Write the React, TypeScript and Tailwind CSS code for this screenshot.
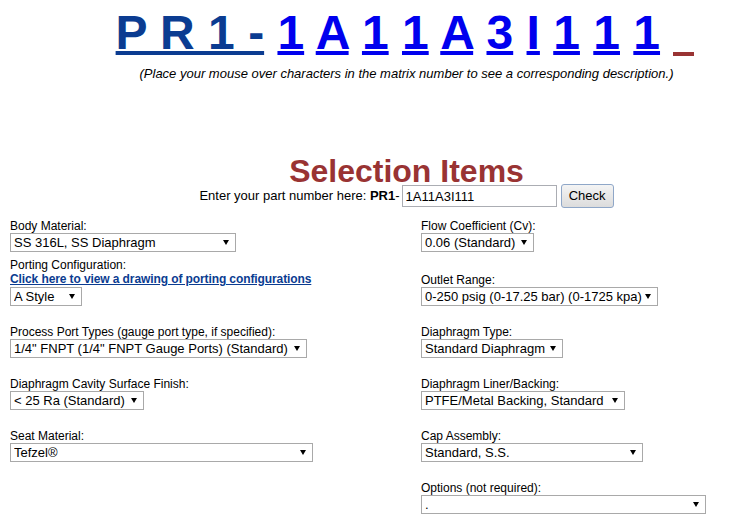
import React from "react";

const chars = ["1", "A", "1", "1", "A", "3", "I", "1", "1", "1"];

const Label = ({ children, className = "" }: { children: React.ReactNode; className?: string }) => (
  <div className={`h-[14px] leading-[14px] ${className}`}>{children}</div>
);

const Select = ({ value, className }: { value: string; className: string }) => (
  <div className={`relative h-[19px] ${className}`}>
    <select
      defaultValue={value}
      className="h-full w-full appearance-none rounded-none border border-[#a9a9a9] bg-white pl-[3px] pr-[8px] text-[13px] leading-[17px] text-black outline-none"
    >
      <option>{value}</option>
    </select>
    <svg
      className="pointer-events-none absolute right-[7px] top-[7px]"
      width="6"
      height="5"
      viewBox="0 0 6 5"
    >
      <path d="M0 0h6L3 5z" fill="#000" />
    </svg>
  </div>
);

export default function App() {
  return (
    <div className="min-h-[522px] w-[734px] bg-white font-['Liberation_Sans',Arial,sans-serif] text-black">
      <div className="pl-[76px] text-center">
        <div className="pt-[5px] text-[48px] font-bold leading-[55px]">
          <span className="text-[#0b3c91] underline decoration-4">P R 1 -</span>{" "}
          {chars.map((c, i) => (
            <React.Fragment key={i}>
              <a href="#" className="text-[#0000ee] underline decoration-4">
                {c}
              </a>{" "}
            </React.Fragment>
          ))}
          <span className="inline-block h-0 w-[21px] border-b-4 border-[#993333] align-[-7px]" />
        </div>
        <p className="mt-[6px] pl-[3px] text-[13px] italic leading-[15px]">
          (Place your mouse over characters in the matrix number to see a corresponding description.)
        </p>
        <div className="mt-[77px] h-[26px] pl-[3px] text-[32px] font-bold leading-[26px] text-[#993333]">
          Selection Items
        </div>
        <div className="flex h-[24px] items-center justify-center pl-[3px] text-[13px]">
          <span>
            Enter your part number here: <b>PR1</b>-
          </span>
          <input
            defaultValue="1A11A3I111"
            className="ml-[2px] h-[22px] w-[155px] border border-[#abadb3] bg-white px-[3px] text-[13px] outline-none"
          />
          <button className="ml-[4px] h-[24px] w-[53px] rounded-[3px] border border-[#8fa7c8] bg-gradient-to-b from-[#f4f4f4] to-[#dcdcdc] text-[13px] text-black">
            Check
          </button>
        </div>
      </div>

      <div className="mt-[11px] flex pl-[10px] text-[12px]">
        <div className="flex w-[411px] flex-col items-start">
          <Label>Body Material:</Label>
          <Select value="SS 316L, SS Diaphragm" className="w-[226px]" />
          <Label className="mt-[6px]">Porting Configuration:</Label>
          <a
            href="#"
            className="h-[14px] font-bold leading-[14px] tracking-[-0.1px] text-[#0b3c91] underline"
          >
            Click here to view a drawing of porting configurations
          </a>
          <Select value="A Style" className="mt-[1px] w-[72px]" />
          <Label className="mt-[19px]">Process Port Types (gauge port type, if specified):</Label>
          <Select value={'1/4" FNPT (1/4" FNPT Gauge Ports) (Standard)'} className="w-[297px]" />
          <Label className="mt-[19px]">Diaphragm Cavity Surface Finish:</Label>
          <Select value="< 25 Ra (Standard)" className="w-[134px]" />
          <Label className="mt-[19px]">Seat Material:</Label>
          <Select value="Tefzel®" className="w-[303px]" />
        </div>
        <div className="flex flex-col items-start">
          <Label>Flow Coefficient (Cv):</Label>
          <Select value="0.06 (Standard)" className="w-[113px]" />
          <Label className="mt-[21px]">Outlet Range:</Label>
          <Select value="0-250 psig (0-17.25 bar) (0-1725 kpa)" className="w-[237px]" />
          <Label className="mt-[19px]">Diaphragm Type:</Label>
          <Select value="Standard Diaphragm" className="w-[142px]" />
          <Label className="mt-[19px]">Diaphragm Liner/Backing:</Label>
          <Select value="PTFE/Metal Backing, Standard" className="w-[204px]" />
          <Label className="mt-[19px]">Cap Assembly:</Label>
          <Select value="Standard, S.S." className="w-[222px]" />
          <Label className="mt-[19px]">Options (not required):</Label>
          <Select value="." className="w-[285px]" />
        </div>
      </div>
    </div>
  );
}
